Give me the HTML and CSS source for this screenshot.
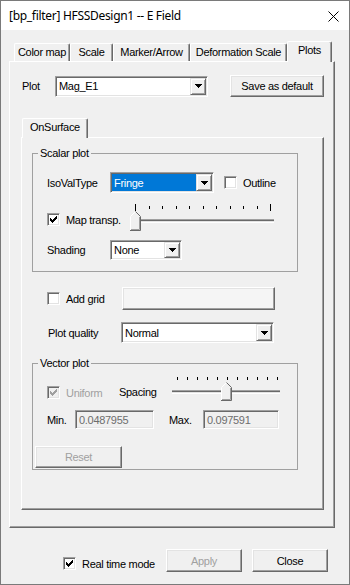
FILE: index.html
```html
<!DOCTYPE html>
<html>
<head>
<meta charset="utf-8">
<link rel="stylesheet" href="styles.css">
</head>
<body>
<div class="win">
  <div class="titlebar">
    <span class="title">[bp_filter] HFSSDesign1 -- E Field</span>
    <svg class="close" width="11" height="11" viewBox="0 0 11 11"><path d="M0.5 0.5L10.5 10.5M10.5 0.5L0.5 10.5" stroke="#000" stroke-width="1" fill="none"/></svg>
  </div>
  <div class="client">
    <div class="tabs">
      <div class="tab w1">Color map</div>
      <div class="tab w2">Scale</div>
      <div class="tab w3">Marker/Arrow</div>
      <div class="tab w4">Deformation Scale</div>
      <div class="tab sel w5">Plots</div>
    </div>
    <div class="panel main">
      <div class="plot-row">
        <span class="plot-lbl">Plot</span>
        <div class="combo c-plot"><span class="val">Mag_E1</span><span class="drop"><svg width="7" height="4" viewBox="0 0 7 4"><path d="M0 0h7v1H0zM1 1h5v1H1zM2 2h3v1H2zM3 3h1v1H3z" fill="#000"/></svg></span></div>
        <button class="btn save">Save as default</button>
      </div>
      <div class="subtabs"><div class="tab sel sub">OnSurface</div></div>
      <div class="panel subp">
        <div class="group scalar">
          <span class="legend">Scalar plot</span>
          <div class="r-iso">
            <span class="lbl-iso">IsoValType</span>
            <div class="combo c-iso"><span class="val hl">Fringe</span><span class="drop"><svg width="7" height="4" viewBox="0 0 7 4"><path d="M0 0h7v1H0zM1 1h5v1H1zM2 2h3v1H2zM3 3h1v1H3z" fill="#000"/></svg></span></div>
            <span class="cb cb-outline"></span>
            <span class="cbtext">Outline</span>
          </div>
          <div class="r-map">
            <div class="cbw cbw-map">
              <span class="cb"><svg width="9" height="9" viewBox="0 0 9 9"><path d="M1 3h1v3H1zM2 4h1v3H2zM3 5h1v3H3zM4 4h1v3H4zM5 3h1v3H5zM6 2h1v3H6zM7 1h1v3H7z" fill="#000"/></svg></span>
              <span class="cbtext">Map transp.</span>
            </div>
            <svg class="slider" width="150" height="30" viewBox="0 0 150 30" shape-rendering="crispEdges">
              <g fill="#000">
                <rect x="6" y="1" width="1" height="7"/>
                <rect x="20" y="3" width="1" height="3"/>
                <rect x="33" y="3" width="1" height="3"/>
                <rect x="47" y="3" width="1" height="3"/>
                <rect x="60" y="3" width="1" height="3"/>
                <rect x="74" y="3" width="1" height="3"/>
                <rect x="87" y="3" width="1" height="3"/>
                <rect x="101" y="3" width="1" height="3"/>
                <rect x="114" y="3" width="1" height="3"/>
                <rect x="128" y="3" width="1" height="3"/>
                <rect x="141" y="1" width="1" height="7"/>
              </g>
              <rect x="6" y="16" width="139" height="1" fill="#a0a0a0"/>
              <rect x="6" y="17" width="139" height="1" fill="#696969"/>
              <rect x="6" y="18" width="139" height="1" fill="#e3e3e3"/>
              <rect x="6" y="19" width="139" height="1" fill="#fff"/>
              <polygon points="1.5,13.5 6.5,8.5 11.5,13.5 11.5,27.5 1.5,27.5" fill="#f0f0f0"/>
              <path d="M1.5 27V13.5L6.5 8.5" stroke="#fff" fill="none" shape-rendering="auto"/>
              <path d="M6.5 8.5L11.5 13.5V27.5H1" stroke="#696969" fill="none" shape-rendering="auto"/>
              <path d="M10.5 14V26.5H2" stroke="#a0a0a0" fill="none" shape-rendering="auto"/>
            </svg>
          </div>
          <div class="r-shade">
            <span class="lbl-iso">Shading</span>
            <div class="combo c-shade"><span class="val">None</span><span class="drop"><svg width="7" height="4" viewBox="0 0 7 4"><path d="M0 0h7v1H0zM1 1h5v1H1zM2 2h3v1H2zM3 3h1v1H3z" fill="#000"/></svg></span></div>
          </div>
        </div>

        <div class="r-grid">
          <div class="cbw cbw-grid">
            <span class="cb"></span>
            <span class="cbtext">Add grid</span>
          </div>
          <button class="btn grid-btn"></button>
        </div>

        <div class="r-quality">
          <span class="lbl-quality">Plot quality</span>
          <div class="combo c-quality"><span class="val">Normal</span><span class="drop"><svg width="7" height="4" viewBox="0 0 7 4"><path d="M0 0h7v1H0zM1 1h5v1H1zM2 2h3v1H2zM3 3h1v1H3z" fill="#000"/></svg></span></div>
        </div>

        <div class="group vector">
          <span class="legend">Vector plot</span>
          <div class="r-uni">
            <div class="cbw cbw-uni">
              <span class="cb dis"><svg width="9" height="9" viewBox="0 0 9 9"><path d="M1 3h1v3H1zM2 4h1v3H2zM3 5h1v3H3zM4 4h1v3H4zM5 3h1v3H5zM6 2h1v3H6zM7 1h1v3H7z" fill="#a0a0a0"/></svg></span>
              <span class="cbtext distext">Uniform</span>
            </div>
            <span class="spacing">Spacing</span>
            <svg class="slider" width="116" height="30" viewBox="0 0 116 30" shape-rendering="crispEdges">
              <g fill="#000">
                <rect x="9" y="3" width="1" height="3"/>
                <rect x="19" y="3" width="1" height="3"/>
                <rect x="29" y="3" width="1" height="3"/>
                <rect x="39" y="3" width="1" height="3"/>
                <rect x="49" y="3" width="1" height="3"/>
                <rect x="59" y="3" width="1" height="3"/>
                <rect x="69" y="3" width="1" height="3"/>
                <rect x="79" y="3" width="1" height="3"/>
                <rect x="89" y="3" width="1" height="3"/>
                <rect x="99" y="3" width="1" height="3"/>
                <rect x="109" y="3" width="1" height="3"/>
              </g>
              <rect x="4" y="16" width="108" height="1" fill="#a0a0a0"/>
              <rect x="4" y="17" width="108" height="1" fill="#696969"/>
              <rect x="4" y="18" width="108" height="1" fill="#e3e3e3"/>
              <rect x="4" y="19" width="108" height="1" fill="#fff"/>
              <polygon points="53.5,13.5 58.5,8.5 63.5,13.5 63.5,26.5 53.5,26.5" fill="#f0f0f0"/>
              <path d="M53.5 26V13.5L58.5 8.5" stroke="#fff" fill="none" shape-rendering="auto"/>
              <path d="M58.5 8.5L63.5 13.5V26.5H53" stroke="#696969" fill="none" shape-rendering="auto"/>
              <path d="M62.5 14V25.5H54" stroke="#a0a0a0" fill="none" shape-rendering="auto"/>
            </svg>
          </div>
          <div class="r-min">
            <span class="lbl-min">Min.</span>
            <div class="tb tb-min">0.0487955</div>
            <span class="lbl-max">Max.</span>
            <div class="tb tb-max">0.097591</div>
          </div>
          <button class="btn dis reset">Reset</button>
        </div>
      </div>
    </div>
    <div class="bottom">
      <div class="cbw cbw-rt">
        <span class="cb"><svg width="9" height="9" viewBox="0 0 9 9"><path d="M1 3h1v3H1zM2 4h1v3H2zM3 5h1v3H3zM4 4h1v3H4zM5 3h1v3H5zM6 2h1v3H6zM7 1h1v3H7z" fill="#000"/></svg></span>
        <span class="cbtext">Real time mode</span>
      </div>
      <button class="btn dis apply">Apply</button>
      <button class="btn closeb">Close</button>
    </div>
  </div>
</div>
</body>
</html>
```

FILE: styles.css
```css
* { box-sizing: border-box; }
html, body { margin: 0; padding: 0; }
body {
  width: 350px;
  height: 585px;
  overflow: hidden;
  background: #f0f0f0;
  font-family: "Liberation Sans", Arial, sans-serif;
  font-size: 11px;
  letter-spacing: -0.3px;
  color: #000;
}

/* base controls */
.btn {
  font: inherit;
  letter-spacing: inherit;
  color: #000;
  background: #f0f0f0;
  margin: 0;
  padding: 0;
  border: 1px solid;
  border-color: #fff #696969 #696969 #fff;
  box-shadow: inset -1px -1px #a0a0a0, inset 1px 1px #e3e3e3;
  display: flex;
  align-items: center;
  justify-content: center;
  flex: none;
}
.btn.dis { color: #a0a0a0; }

.combo {
  display: flex;
  flex: none;
  background: #fff;
  padding: 1px;
  border: 1px solid;
  border-color: #a0a0a0 #fff #fff #a0a0a0;
  box-shadow: inset 1px 1px #696969, inset -1px -1px #e3e3e3;
}
.combo .val {
  flex: 1;
  display: flex;
  align-items: center;
  padding-left: 2px;
  white-space: nowrap;
}
.combo .val.hl { background: #0078d7; color: #fff; }
.combo .drop {
  width: 16px;
  flex: none;
  display: flex;
  align-items: center;
  justify-content: center;
  background: #f0f0f0;
  border: 1px solid;
  border-color: #e3e3e3 #696969 #696969 #e3e3e3;
  box-shadow: inset 1px 1px #fff, inset -1px -1px #a0a0a0;
}
.combo .drop svg { display: block; }

.cb {
  width: 13px;
  height: 13px;
  flex: none;
  display: flex;
  align-items: center;
  justify-content: center;
  background: #fff;
  border: 1px solid;
  border-color: #a0a0a0 #fff #fff #a0a0a0;
  box-shadow: inset 1px 1px #696969, inset -1px -1px #e3e3e3;
}
.cb.dis { background: #f0f0f0; }
.cb svg { display: block; }

/* window */
.win {
  width: 350px;
  height: 585px;
  border: 1px solid #7a7a7a;
  background: #f0f0f0;
  display: flex;
  flex-direction: column;
}
.titlebar {
  height: 29px;
  flex: none;
  background: #fff;
  display: flex;
  align-items: center;
  justify-content: space-between;
  padding: 0 10px 0 8px;
}
.title {
  font-family: "Noto Sans", sans-serif;
  font-size: 12px;
  letter-spacing: -0.3px;
  color: #000;
}
.close { display: block; margin-top: 2px; }
.client { flex: 1; display: flex; flex-direction: column; }

.tabs {
  display: flex;
  align-items: flex-end;
  height: 20px;
  margin-top: 11px;
  padding-left: 13px;
}
.tab {
  height: 18px;
  line-height: 16px;
  text-align: center;
  white-space: nowrap;
  background: #f0f0f0;
  border-top: 1px solid #fff;
  border-left: 1px solid #fff;
  border-right: 1px solid #696969;
  box-shadow: inset -1px 0 #a0a0a0;
  border-radius: 2px 2px 0 0;
}
.tab.sel {
  height: 21px;
  margin-bottom: -1px;
  position: relative;
  z-index: 2;
}
.w1 { width: 56px; }
.w2 { width: 43px; }
.w3 { width: 77px; }
.w4 { width: 97px; }
.w5 { width: 45px; }

.panel {
  border-top: 1px solid #fff;
  border-left: 1px solid #fff;
  border-right: 1px solid #696969;
  border-bottom: 1px solid #696969;
  box-shadow: inset -1px -1px #a0a0a0;
}
.main {
  margin-left: 8px;
  width: 326px;
  height: 467px;
  flex: none;
}
.plot-row {
  display: flex;
  align-items: center;
  height: 22px;
  margin-top: 13px;
  padding-left: 12px;
}
.plot-lbl { width: 33px; }
.c-plot { width: 153px; height: 21px; }
.save { margin-left: 22px; width: 94px; height: 22px; }

.subtabs {
  display: flex;
  align-items: flex-end;
  height: 19px;
  margin-top: 21px;
  padding-left: 12px;
}
.tab.sub { width: 66px; height: 20px; }
.subp {
  margin-left: 11px;
  width: 303px;
  height: 373px;
}

.group {
  position: relative;
  border: 1px solid #a0a0a0;
  width: 266px;
  margin-left: 10px;
}
.scalar { margin-top: 15px; height: 119px; }
.vector { margin-top: 20px; height: 107px; }
.legend {
  position: absolute;
  top: -7px;
  left: 5px;
  padding: 0 2px;
  line-height: 13px;
  background: #f0f0f0;
}

.r-iso {
  display: flex;
  align-items: center;
  height: 21px;
  margin-top: 18px;
  padding-left: 14px;
}
.lbl-iso { width: 63px; }
.c-iso { width: 104px; height: 21px; }
.cb-outline { margin-left: 10px; }
.cbtext { margin-left: 6px; white-space: nowrap; }

.r-map {
  display: flex;
  align-items: flex-start;
  height: 30px;
  margin-top: 10px;
  padding-left: 14px;
}
.cbw { display: flex; align-items: center; height: 13px; flex: none; }
.cbw-map { width: 82px; margin-top: 10px; }
.slider { display: block; flex: none; }

.r-shade {
  display: flex;
  align-items: center;
  height: 20px;
  margin-top: 7px;
  padding-left: 14px;
}
.c-shade { width: 72px; height: 20px; }

.r-grid {
  display: flex;
  align-items: center;
  height: 23px;
  margin-top: 15px;
  padding-left: 25px;
}
.cbw-grid { width: 75px; }
.grid-btn { width: 153px; height: 23px; background: #f5f5f5; }

.r-quality {
  display: flex;
  align-items: center;
  height: 21px;
  margin-top: 12px;
  padding-left: 26px;
}
.lbl-quality { width: 73px; }
.c-quality { width: 153px; height: 21px; }

.r-uni {
  display: flex;
  align-items: flex-start;
  height: 30px;
  margin-top: 10px;
  padding-left: 14px;
}
.cbw-uni { width: 72px; margin-top: 12px; }
.spacing { width: 49px; margin-top: 12px; line-height: 13px; flex: none; }
.distext { color: #a0a0a0; }

.r-min {
  display: flex;
  align-items: center;
  height: 19px;
  margin-top: 6px;
  padding-left: 14px;
}
.lbl-min { width: 28px; flex: none; }
.lbl-max { width: 34px; margin-left: 15px; flex: none; }
.tb {
  height: 19px;
  flex: none;
  display: flex;
  align-items: center;
  padding-left: 3px;
  color: #6d6d6d;
  background: #f0f0f0;
  border: 1px solid;
  border-color: #a0a0a0 #fff #fff #a0a0a0;
  box-shadow: inset 1px 1px #696969, inset -1px -1px #e3e3e3;
}
.tb-min { width: 79px; }
.tb-max { width: 76px; }
.reset { margin-top: 17px; margin-left: 2px; width: 87px; height: 22px; }

.bottom {
  display: flex;
  align-items: flex-start;
  height: 23px;
  margin-top: 21px;
  padding-left: 62px;
}
.cbw-rt { width: 103px; margin-top: 8px; }
.apply { width: 76px; height: 23px; }
.closeb { width: 76px; height: 23px; margin-left: 10px; }
```
